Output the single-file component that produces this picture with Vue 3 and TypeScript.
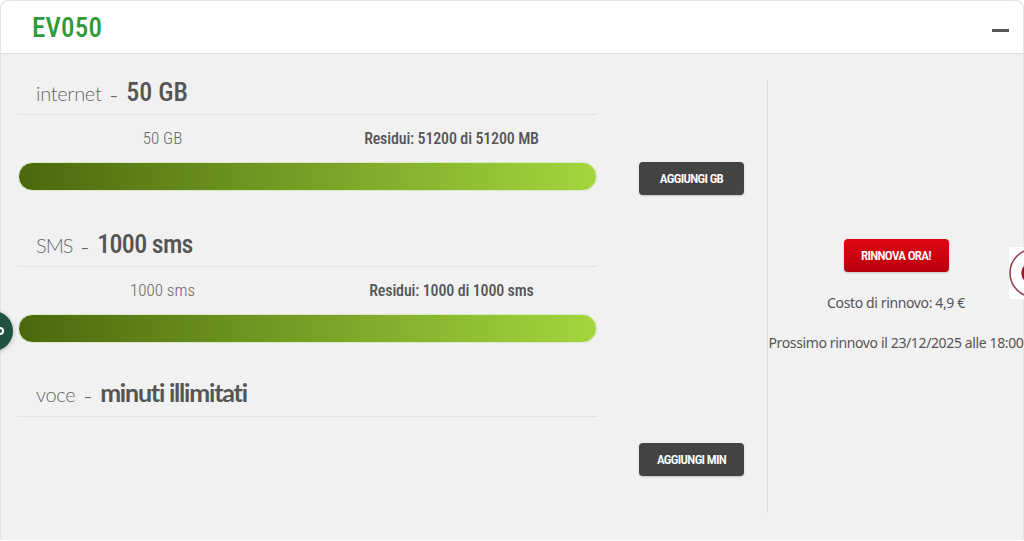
<template>
  <div class="card">
    <header class="card-head">
      <h2 class="plan-name">EV050</h2>
      <span class="collapse"></span>
    </header>

    <div class="card-body">
      <div class="usage">
        <section v-for="item in items" :key="item.label" class="usage-row" :class="item.rowClass">
          <div class="usage-main">
            <div class="usage-title">
              <span class="label">{{ item.label }}</span>
              <span class="dash">–</span>
              <strong class="amount">{{ item.amount }}</strong>
            </div>
            <template v-if="item.left">
              <div class="usage-info">
                <span class="total">{{ item.left }}</span>
                <span class="remaining">{{ item.right }}</span>
              </div>
              <div class="bar"></div>
            </template>
          </div>
          <div class="usage-action">
            <button v-if="item.action" class="btn btn-dark" type="button">{{ item.action }}</button>
          </div>
        </section>
      </div>

      <aside class="renew">
        <button class="btn btn-red" type="button">RINNOVA ORA!</button>
        <p class="cost">Costo di rinnovo: 4,9 €</p>
        <p class="next">Prossimo rinnovo il 23/12/2025 alle 18:00</p>
      </aside>
    </div>

    <!-- elementi flottanti sopra la pagina -->
    <div class="float-chat">
      <svg width="10" height="10" viewBox="0 0 10 10"><circle cx="2" cy="5" r="3" fill="none" stroke="#fff" stroke-width="2" /></svg>
    </div>
    <div class="float-badge">
      <svg width="15" height="52" viewBox="0 0 15 52">
        <circle cx="25" cy="26" r="24" fill="#fff" stroke="#8f3a48" stroke-width="1.5" />
        <circle cx="23" cy="26" r="9" fill="none" stroke="#a01828" stroke-width="3.5" />
      </svg>
    </div>
  </div>
</template>

<script setup lang="ts">
interface UsageItem {
  label: string
  amount: string
  left?: string
  right?: string
  action?: string
  rowClass: string
}

const items: UsageItem[] = [
  {
    label: 'internet',
    amount: '50 GB',
    left: '50 GB',
    right: 'Residui: 51200 di 51200 MB',
    action: 'AGGIUNGI GB',
    rowClass: 'row-internet'
  },
  {
    label: 'SMS',
    amount: '1000 sms',
    left: '1000 sms',
    right: 'Residui: 1000 di 1000 sms',
    rowClass: 'row-sms'
  },
  {
    label: 'voce',
    amount: 'minuti illimitati',
    action: 'AGGIUNGI MIN',
    rowClass: 'row-voce'
  }
]
</script>

<style>
body {
  background: #fff;
  overflow: hidden;
}
</style>

<style scoped>
.card {
  position: relative;
  width: 1024px;
  height: 540px;
  box-sizing: border-box;
  background: #f1f1f1;
  border: 1px solid #e4e4e4;
  border-bottom: 0;
  border-radius: 8px 8px 0 0;
  font-family: "Lato", "Liberation Sans", sans-serif;
  color: #555;
}

.card-head {
  display: flex;
  align-items: center;
  justify-content: space-between;
  height: 53px;
  box-sizing: border-box;
  padding: 2px 14px 0 31px;
  background: #fff;
  border-bottom: 1px solid #dedede;
  border-radius: 8px 8px 0 0;
}

.plan-name {
  margin: 0;
  font-family: "Roboto", sans-serif;
  font-stretch: 80%;
  font-size: 27px;
  font-weight: 500;
  letter-spacing: 0.2px;
  color: #2f9a3a;
}

.collapse {
  width: 17px;
  height: 3px;
  margin-top: 5px;
  background: #555;
}

.card-body {
  display: flex;
  padding: 27px 0 0 17px;
}

.usage {
  flex-shrink: 0;
  width: 750px;
  height: 432px;
  border-right: 1px solid #d9d9d9;
  box-sizing: border-box;
}

.usage-row {
  display: flex;
}

.row-internet {
  height: 152px;
}

.row-sms {
  height: 150px;
}

.usage-main {
  width: 579px;
  flex-shrink: 0;
}

.usage-title {
  display: flex;
  align-items: baseline;
  height: 33px;
  padding-left: 18px;
  border-bottom: 1px dotted #d4d4d4;
  line-height: 22px;
}

.row-voce .usage-title {
  line-height: 19px;
}

.label {
  font-size: 20px;
  font-weight: 300;
  letter-spacing: -0.3px;
  color: #666;
}

.row-sms .label {
  letter-spacing: -1px;
}

.dash {
  margin: 0 8px;
  font-size: 15px;
  color: #666;
}

.amount {
  font-family: "Roboto", sans-serif;
  font-stretch: 80%;
  font-size: 26px;
  font-weight: 500;
  color: #555;
}

.row-sms .amount {
  letter-spacing: -0.7px;
}

.row-voce .amount {
  font-family: "Lato", sans-serif;
  font-size: 25px;
  font-weight: 700;
  letter-spacing: -1.2px;
}

.usage-info {
  display: grid;
  grid-template-columns: 289px 289px;
  height: 46px;
  padding-bottom: 1px;
  align-items: center;
  font-family: "Roboto", sans-serif;
  font-stretch: 80%;
  text-align: center;
}

.total {
  font-size: 17px;
  font-weight: 300;
  color: #666;
}

.remaining {
  font-size: 16px;
  font-weight: 500;
  letter-spacing: -0.15px;
}

.bar {
  width: 579px;
  height: 29px;
  box-sizing: border-box;
  border: 1px solid #dbe8c4;
  border-radius: 15px;
  background: linear-gradient(90deg, #4a690d, #a4d63e);
}

.usage-action {
  flex: 1;
  display: flex;
  justify-content: center;
  align-items: flex-start;
  padding-left: 19px;
}

.row-internet .usage-action {
  padding-top: 81px;
}

.row-voce .usage-action {
  padding-top: 60px;
}

.btn {
  border: 0;
  border-radius: 4px;
  color: #fff;
  font-family: "Roboto", sans-serif;
  font-stretch: 75%;
  font-weight: 600;
  font-size: 13px;
  letter-spacing: -0.65px;
  box-shadow: 0 1px 2px rgba(0, 0, 0, 0.2);
}

.btn-dark {
  width: 105px;
  height: 33px;
  background: #434343;
}

.btn-red {
  width: 105px;
  height: 33px;
  background: linear-gradient(180deg, #e00714, #b8000d);
}

.renew {
  flex-shrink: 0;
  width: 256px;
  display: flex;
  flex-direction: column;
  align-items: center;
  padding-top: 158px;
  font-family: "Noto Sans", sans-serif;
  font-size: 14px;
  letter-spacing: -0.37px;
  white-space: nowrap;
}

.cost {
  margin: 21px 0 0;
  line-height: 20px;
}

.next {
  margin: 20px 0 0;
  line-height: 20px;
}

.float-chat {
  position: absolute;
  left: -28px;
  top: 310px;
  width: 40px;
  height: 40px;
  padding-right: 5px;
  box-sizing: border-box;
  display: flex;
  align-items: center;
  justify-content: flex-end;
  border-radius: 50%;
  background: #1d5140;
  box-shadow: 0 1px 5px rgba(0, 0, 0, 0.25);
}

.float-badge {
  position: absolute;
  right: -1px;
  top: 246px;
  width: 15px;
  height: 52px;
  background: #fff;
}
</style>
